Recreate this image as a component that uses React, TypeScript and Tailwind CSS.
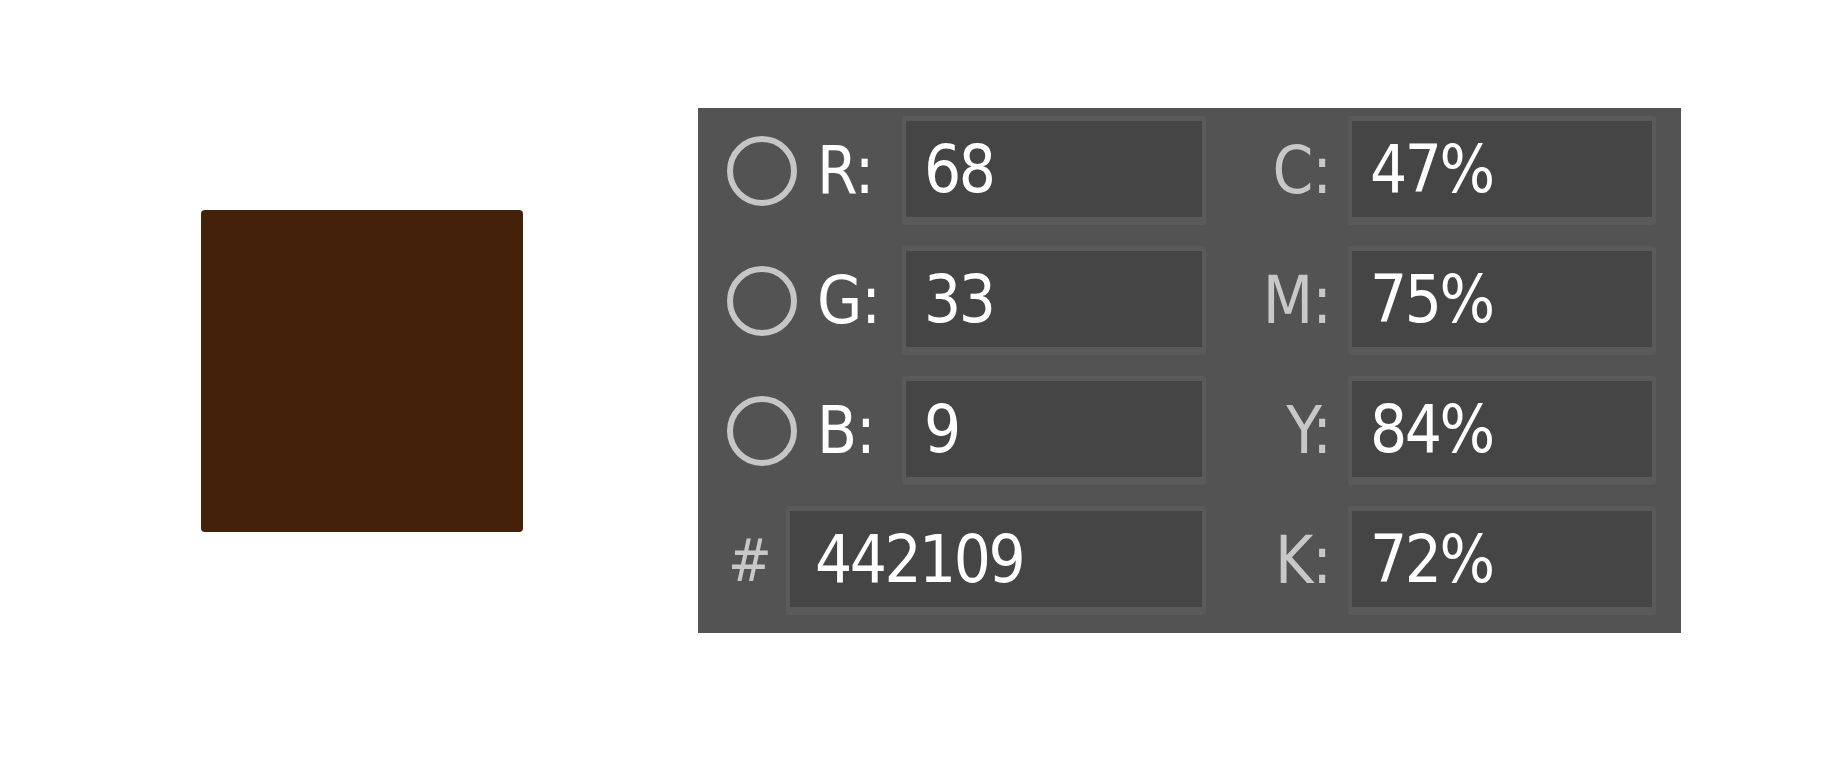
import React from "react";

interface Channel {
  label: string;
  value: string;
}

const rgb: Channel[] = [
  { label: "R:", value: "68" },
  { label: "G:", value: "33" },
  { label: "B:", value: "9" },
];

const cmyk: Channel[] = [
  { label: "C:", value: "47%" },
  { label: "M:", value: "75%" },
  { label: "Y:", value: "84%" },
  { label: "K:", value: "72%" },
];

const font = {
  fontFamily: '"DejaVu Sans Condensed", "DejaVu Sans", Tahoma, sans-serif',
};

function Field({ value, width, pad }: { value: string; width: string; pad: string }) {
  return (
    <div
      className={`${width} h-[109px] rounded-[3px] border-x-[4px] border-t-[5px] border-b-[8px] border-[#5a5a5a] bg-[#454545] flex items-center ${pad}`}
    >
      <span className="text-white text-[65px] tracking-[-2.5px] leading-none">{value}</span>
    </div>
  );
}

function Radio() {
  return <div className="w-[70px] h-[70px] rounded-full border-[6px] border-[#c6c6c6] shrink-0" />;
}

export default function App() {
  return (
    <div className="w-[1846px] h-[779px] bg-white flex items-start pl-[201px] pt-[108px]" style={font}>
      <div className="w-[322px] h-[322px] mt-[102px] rounded-[4px] bg-[#442109] shrink-0" />

      <div className="ml-[175px] w-[983px] h-[525px] bg-[#535353] pt-[8px] flex flex-col gap-[21px]">
        {cmyk.map((c, i) => (
          <div key={c.label} className="flex items-center">
            {i < 3 ? (
              <div className="flex items-center pl-[29px]">
                <Radio />
                <span className="ml-[20px] w-[85px] text-white text-[65px] tracking-[-1px] leading-none">
                  {rgb[i].label}
                </span>
                <Field value={rgb[i].value} width="w-[304px]" pad="pl-[18px]" />
              </div>
            ) : (
              <div className="flex items-center pl-[30px]">
                <span className="w-[58px] text-[#c8c8c8] text-[58px] leading-none">#</span>
                <Field value="442109" width="w-[420px]" pad="pl-[25px]" />
              </div>
            )}
            <span className="w-[142px] pr-[17px] text-right text-[#c8c8c8] text-[65px] tracking-[-1px] leading-none">
              {c.label}
            </span>
            <Field value={c.value} width="w-[308px]" pad="pl-[18px]" />
          </div>
        ))}
      </div>
    </div>
  );
}
